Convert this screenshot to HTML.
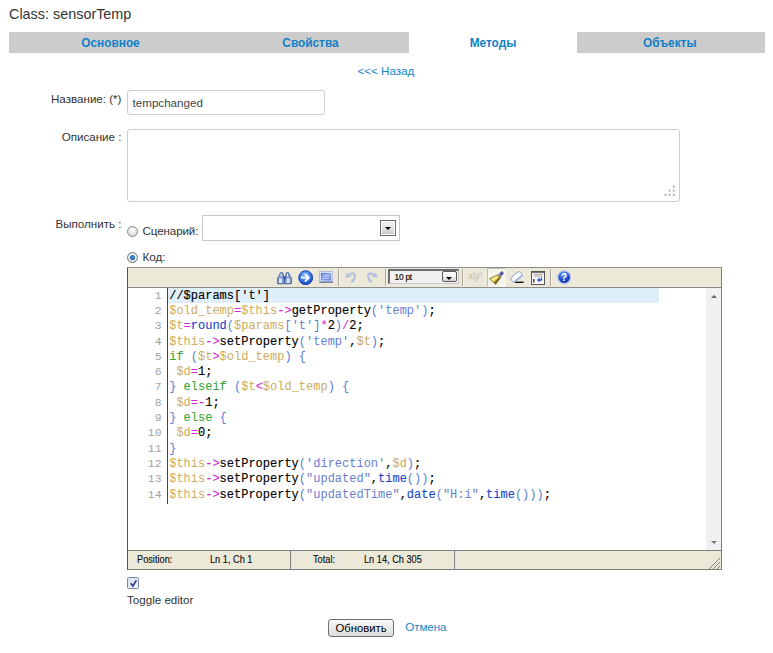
<!DOCTYPE html>
<html><head><meta charset="utf-8">
<style>
html,body{margin:0;padding:0;background:#fff;}
body{width:773px;height:653px;position:relative;overflow:hidden;font-family:"Liberation Sans",sans-serif;font-size:11.6px;color:#333;}
.abs{position:absolute;white-space:nowrap;}
a{color:#1487c9;text-decoration:none;}
#title{left:9px;top:6px;font-size:14.4px;line-height:17px;color:#333;}
#tabs{left:9px;top:31.6px;width:756px;height:21px;background:#ccc;}
.tab{position:absolute;top:0;height:21px;line-height:22.4px;text-align:center;font-weight:bold;font-size:11.85px;color:#1080c8;}
.lbl{text-align:right;width:121.5px;left:0;line-height:14px;color:#333;}
.inp{border:1px solid #ccc;border-radius:3px;background:#fff;box-sizing:border-box;}
.ln{position:absolute;left:0;width:34.5px;height:15.3px;line-height:15.3px;text-align:right;color:#a2a2a2;font-family:"Liberation Mono",monospace;font-size:11.4px;}
.cl{position:absolute;left:42.2px;height:15.3px;line-height:15.3px;font-family:"Liberation Mono",monospace;font-size:12px;color:#000;white-space:pre;}
.n{color:#000;-webkit-text-stroke:0.14px #000}
.v{color:#ccac60}
.k{color:#3aa63a;-webkit-text-stroke:0.1px #3aa63a}
.f{color:#1a44c8;-webkit-text-stroke:0.1px #1a44c8}
.s{color:#6a7ed0}
.o{color:#d428d4;-webkit-text-stroke:0.1px #d428d4}
.b{color:#5a7edc}
.sep{position:absolute;top:2px;width:1px;height:17px;background:#aca899;border-right:1px solid #f6f4ea;}
.st{position:absolute;top:0;height:18px;line-height:18.5px;font-size:10.1px;color:#111;-webkit-text-stroke:0.15px #111;transform:scaleX(0.912);transform-origin:0 0;}
</style></head><body>
<div class="abs" id="title">Class: sensorTemp</div>
<div class="abs" id="tabs">
 <div class="tab" style="left:0;width:203px;">Основное</div>
 <div class="tab" style="left:203px;width:197px;">Свойства</div>
 <div class="tab" style="left:400px;width:168px;background:#fff;">Методы</div>
 <div class="tab" style="left:568px;width:185.6px;">Объекты</div>
</div>
<a class="abs" style="left:357.5px;top:64px;line-height:14px;">&lt;&lt;&lt; Назад</a>

<div class="abs lbl" style="top:92px;">Название: (*)</div>
<div class="abs inp" style="left:127px;top:90px;width:198px;height:25px;"><span class="abs" style="left:4.6px;top:5px;line-height:14px;color:#444;">tempchanged</span></div>

<div class="abs lbl" style="top:130px;">Описание :</div>
<div class="abs inp" style="left:127px;top:129px;width:553px;height:73px;">
<svg class="abs" style="left:535.8px;top:55.4px" width="12" height="12" viewBox="0 0 12 12"><g fill="#b2b2b2"><rect x="8.8" y="0.5" width="2" height="2"/><rect x="4.65" y="4.65" width="2" height="2"/><rect x="8.8" y="4.65" width="2" height="2"/><rect x="0.5" y="8.8" width="2" height="2"/><rect x="4.65" y="8.8" width="2" height="2"/><rect x="8.8" y="8.8" width="2" height="2"/></g></svg>
</div>

<div class="abs lbl" style="top:217px;">Выполнить :</div>
<div class="abs" style="left:126.7px;top:226.3px;width:9.2px;height:9.2px;border:1px solid #8a8a8a;border-radius:50%;background:radial-gradient(circle at 50% 35%,#fff 0,#e6e6e6 55%,#c4c4c4 100%);"></div>
<div class="abs" style="left:142.6px;top:224px;line-height:14px;letter-spacing:-0.12px;">Сценарий:</div>
<div class="abs inp" style="left:202px;top:215px;width:198px;height:25.5px;border-radius:0;border-color:#c8c8c8;"></div>
<div class="abs" style="left:380px;top:220px;width:15.8px;height:15.8px;border:1px solid #6a6a6a;box-sizing:border-box;background:#fff;"><div style="position:absolute;left:1px;top:1px;right:1px;bottom:1px;background:linear-gradient(#f0f0f0,#e4e4e4 50%,#c8c8c8);"></div><div style="position:absolute;left:3.7px;top:6px;width:0;height:0;border-left:3.3px solid transparent;border-right:3.3px solid transparent;border-top:3.6px solid #000;"></div></div>
<div class="abs" style="left:126.7px;top:252.2px;width:9.2px;height:9.2px;border:1px solid #777;border-radius:50%;background:radial-gradient(circle at 50% 40%,#fff 0,#e4e4e4 60%,#c8c8c8 100%);"><div style="position:absolute;left:2.1px;top:2.1px;width:5px;height:5px;border-radius:50%;background:radial-gradient(circle at 50% 40%,#4aa0e0,#0a3a78);"></div></div>
<div class="abs" style="left:142.6px;top:250px;line-height:14px;">Код:</div>

<div class="abs" id="editor" style="left:127px;top:267px;width:595px;height:303px;background:#fff;">
 <div class="abs" style="left:0;top:0;width:595px;height:303px;border:1px solid #7c7c7c;border-top-color:#8e8e8e;border-left-color:#555;box-sizing:border-box;z-index:5;pointer-events:none;"></div>
 <div class="abs" style="left:0;top:0;width:595px;height:20px;background:#ece9d8;border-bottom:1px solid #8c8c8c;"><!-- binoculars -->
<svg class="abs" style="left:150px;top:4.5px" width="15" height="13" viewBox="0 0 15 13">
 <path d="M3.4 0.8h2.2l0.9 3.2 0.8 1.2v6.6h-6.6v-6l1.6-2z" fill="#8ea4d4" stroke="#3a5498" stroke-width="0.9"/>
 <path d="M9.4 0.8h2.2l1.1 3 1.6 2v6h-6.6v-6.6l0.8-1.2z" fill="#8ea4d4" stroke="#3a5498" stroke-width="0.9"/>
 <rect x="2.2" y="6.6" width="2.4" height="4.4" fill="#e8eefa"/><rect x="10" y="6.6" width="2.4" height="4.4" fill="#e8eefa"/>
 <rect x="3.6" y="1.6" width="1.2" height="2.4" fill="#dfe6f6"/><rect x="9.8" y="1.6" width="1.2" height="2.4" fill="#dfe6f6"/>
 <rect x="6.4" y="4.6" width="2.2" height="2.6" fill="#2a4690"/>
</svg>
<!-- go arrow -->
<svg class="abs" style="left:170.5px;top:3px" width="15.4" height="15.4" viewBox="0 0 16 16">
 <defs><radialGradient id="g1" cx="0.45" cy="0.35" r="0.7"><stop offset="0" stop-color="#9cc4ff"/><stop offset="0.55" stop-color="#3a78e6"/><stop offset="1" stop-color="#1234a8"/></radialGradient></defs>
 <circle cx="8" cy="8" r="7.3" fill="url(#g1)" stroke="#1a3cb0" stroke-width="0.9"/>
 <path d="M3.8 8h7.4M7.8 4.6l3.6 3.4-3.6 3.4" fill="none" stroke="#fff" stroke-width="1.9" stroke-linecap="round" stroke-linejoin="round"/>
</svg>
<!-- fullscreen -->
<svg class="abs" style="left:192px;top:4.3px" width="14" height="12" viewBox="0 0 14 12">
 <defs><linearGradient id="g3" x1="0" y1="0" x2="1" y2="1"><stop offset="0" stop-color="#4a6ad0"/><stop offset="0.5" stop-color="#8ea4ea"/><stop offset="1" stop-color="#5272d6"/></linearGradient></defs>
 <rect x="0.5" y="0.5" width="13" height="10.6" fill="#f4f6fc" stroke="#b4bcd8"/>
 <rect x="1.8" y="1.8" width="10.4" height="7.8" fill="url(#g3)"/>
 <rect x="3.6" y="3.4" width="6.8" height="0.9" fill="#c4d0f6"/><rect x="3.6" y="5.2" width="6.8" height="0.9" fill="#c4d0f6"/><rect x="3.6" y="7" width="6.8" height="0.9" fill="#c4d0f6"/>
 <rect x="0.6" y="10.6" width="13.2" height="1" fill="#3a4a8a"/>
</svg>
<div class="sep" style="left:211px"></div>
<!-- undo -->
<svg class="abs" style="left:218.2px;top:4.4px" width="12" height="12" viewBox="0 0 12 12"><path d="M4 4.6 C5.4 1.6 9.6 1.4 9.9 4.8 C10.1 7.2 8.4 9.6 6.4 11.2" fill="none" stroke="#b6c3dd" stroke-width="2.3" stroke-linecap="butt"/><path d="M0.3 6.9 L1.9 1.5 L6.3 5.6 Z" fill="#b6c3dd"/></svg>
<!-- redo -->
<svg class="abs" style="left:239.4px;top:4.4px" width="12" height="12" viewBox="0 0 12 12"><g transform="translate(12,0) scale(-1,1)"><path d="M4 4.6 C5.4 1.6 9.6 1.4 9.9 4.8 C10.1 7.2 8.4 9.6 6.4 11.2" fill="none" stroke="#b6c3dd" stroke-width="2.3" stroke-linecap="butt"/><path d="M0.3 6.9 L1.9 1.5 L6.3 5.6 Z" fill="#b6c3dd"/></g></svg>
<div class="sep" style="left:257.5px"></div>
<!-- select -->
<div class="abs" style="left:261px;top:2.2px;width:71px;height:15px;box-sizing:border-box;background:#f0f0f0;border:1px solid #c8c8c8;border-top:2px solid #6e6e6e;border-left:2px solid #6e6e6e;">
 <span class="abs" style="left:4.5px;top:-0.4px;line-height:12px;font-size:8.4px;color:#111;letter-spacing:-0.25px;-webkit-text-stroke:0.2px #111;">10 pt</span>
 <div class="abs" style="left:51.6px;top:-0.2px;width:15.8px;height:11.4px;box-sizing:border-box;border:1px solid #5a5a5a;border-radius:2px;background:linear-gradient(#fff,#f4f4f4 50%,#d0d0d0);"><div style="position:absolute;left:3.5px;top:5px;width:0;height:0;border-left:3.2px solid transparent;border-right:3.2px solid transparent;border-top:3.4px solid #000;"></div></div>
</div>
<div class="sep" style="left:335px"></div>
<!-- ab check (disabled) -->
<div class="abs" style="left:341px;top:3px;font-family:'Liberation Serif',serif;font-size:10.5px;line-height:12px;color:#cbc49a;">ab</div>
<svg class="abs" style="left:346px;top:5px" width="10" height="11" viewBox="0 0 10 11"><path d="M0.6 7.6 L3 10 L9.4 1.4 L7.6 0.6 L2.8 7.6 L1.6 6.6Z" fill="#f0eee0" stroke="#c0bcc8" stroke-width="0.8"/></svg>
<!-- pressed highlight button -->
<div class="abs" style="left:359.5px;top:1px;width:19px;height:18.5px;box-sizing:border-box;background:#f5f4ec;border:1px solid #c4c0ae;border-right-color:#fbfaf6;border-bottom-color:#fbfaf6;"></div>
<svg class="abs" style="left:362px;top:3.5px" width="15" height="14" viewBox="0 0 15 14">
 <path d="M10.4 3.2 L12.6 0.4 L14.6 2 L12.4 4.8Z" fill="#5a58b8" stroke="#3a3888" stroke-width="0.6"/>
 <path d="M8.6 4.2 L10.4 3 L12.6 4.8 L11.4 6.6Z" fill="#9a9ab0" stroke="#555" stroke-width="0.5"/>
 <path d="M0.4 7.6 L8.4 4 L11.6 6.8 L6.6 13.4 Z" fill="#e8c84a" stroke="#7a6a2a" stroke-width="0.7"/>
 <path d="M2 8 L8 5.2 L9.4 6.4 L4.6 9.8Z" fill="#f8ec9a"/>
 <path d="M5 11.6 L6.6 13.4 L11.6 6.8 L10.4 5.8Z" fill="#8a6a20"/>
</svg>
<!-- eraser -->
<svg class="abs" style="left:383px;top:4px" width="14" height="13" viewBox="0 0 14 13">
 <rect x="5" y="10.6" width="8.6" height="1.4" fill="#111"/>
 <g transform="rotate(-38 6.5 6)"><rect x="0.4" y="3" width="12.4" height="6" rx="2.6" fill="#fbfcff" stroke="#8a98c8" stroke-width="0.9"/><path d="M1 7.4 h11.4 a2.6 2.6 0 0 1 -2.2 1.6 h-7 a2.6 2.6 0 0 1 -2.2 -1.6z" fill="#aab8e4"/></g>
</svg>
<!-- word wrap -->
<svg class="abs" style="left:404px;top:4px" width="14" height="14" viewBox="0 0 14 14">
 <rect x="0.5" y="0.5" width="13" height="13" fill="#fff" stroke="#555"/>
 <rect x="1" y="1" width="12" height="1.2" fill="#777"/>
 <rect x="2.6" y="3.4" width="9" height="1" fill="#a08888"/><rect x="2.6" y="5.2" width="9" height="0.9" fill="#c8b8b8"/>
 <rect x="2.2" y="8" width="1.2" height="3.6" fill="#111"/>
 <path d="M11.2 6.4 v3.4 h-2.6 v1.6 l-2.8-2.4 2.8-2.4 v1.6 h1.2 v-1.8z" fill="#2a5ad8"/>
</svg>
<div class="sep" style="left:423px"></div>
<!-- help -->
<svg class="abs" style="left:429.6px;top:3.2px" width="14.4" height="14.4" viewBox="0 0 15 15">
 <defs><radialGradient id="g2" cx="0.45" cy="0.3" r="0.75"><stop offset="0" stop-color="#7aa8ff"/><stop offset="0.55" stop-color="#2050d0"/><stop offset="1" stop-color="#0a1a8a"/></radialGradient></defs>
 <circle cx="7.5" cy="7.5" r="6.7" fill="url(#g2)" stroke="#b4c6f0" stroke-width="1.3"/>
 <text x="7.5" y="11.3" text-anchor="middle" font-family="Liberation Sans, sans-serif" font-weight="bold" font-size="10.5" fill="#fff">?</text>
</svg>
</div>
 <div class="abs" style="left:41px;top:21px;width:491px;height:15.2px;background:#dfeffa;"></div>
 <div class="abs" style="left:39.8px;top:21px;width:1.4px;height:216px;background:#444;"></div>
 <div class="abs" style="left:579px;top:21px;width:15px;height:262px;background:#f0f0f0;"></div>
 <div class="abs" style="left:583.5px;top:27.5px;width:0;height:0;border-left:3.2px solid transparent;border-right:3.2px solid transparent;border-bottom:3.4px solid #666;"></div>
 <div class="abs" style="left:583.5px;top:273.5px;width:0;height:0;border-left:3.2px solid transparent;border-right:3.2px solid transparent;border-top:3.4px solid #777;"></div>
 <div class="ln" style="top:21.60px">1</div><div class="cl" style="top:21.60px"><span class="n">//$params['t']</span></div>
<div class="ln" style="top:36.90px">2</div><div class="cl" style="top:36.90px"><span class="v">$old_temp</span><span class="o">=</span><span class="v">$this</span><span class="o">-&gt;</span><span class="n">getProperty</span><span class="b">(</span><span class="s">'temp'</span><span class="b">)</span><span class="n">;</span></div>
<div class="ln" style="top:52.20px">3</div><div class="cl" style="top:52.20px"><span class="v">$t</span><span class="o">=</span><span class="f">round</span><span class="b">(</span><span class="v">$params</span><span class="b">[</span><span class="s">'t'</span><span class="b">]</span><span class="o">*</span><span class="n">2</span><span class="b">)</span><span class="o">/</span><span class="n">2;</span></div>
<div class="ln" style="top:67.50px">4</div><div class="cl" style="top:67.50px"><span class="v">$this</span><span class="o">-&gt;</span><span class="n">setProperty</span><span class="b">(</span><span class="s">'temp'</span><span class="n">,</span><span class="v">$t</span><span class="b">)</span><span class="n">;</span></div>
<div class="ln" style="top:82.80px">5</div><div class="cl" style="top:82.80px"><span class="k">if</span><span class="n"> </span><span class="b">(</span><span class="v">$t</span><span class="o">&gt;</span><span class="v">$old_temp</span><span class="b">)</span><span class="n"> </span><span class="b">{</span></div>
<div class="ln" style="top:98.10px">6</div><div class="cl" style="top:98.10px"><span class="n"> </span><span class="v">$d</span><span class="o">=</span><span class="n">1;</span></div>
<div class="ln" style="top:113.40px">7</div><div class="cl" style="top:113.40px"><span class="b">}</span><span class="n"> </span><span class="k">elseif</span><span class="n"> </span><span class="b">(</span><span class="v">$t</span><span class="o">&lt;</span><span class="v">$old_temp</span><span class="b">)</span><span class="n"> </span><span class="b">{</span></div>
<div class="ln" style="top:128.70px">8</div><div class="cl" style="top:128.70px"><span class="n"> </span><span class="v">$d</span><span class="o">=-</span><span class="n">1;</span></div>
<div class="ln" style="top:144.00px">9</div><div class="cl" style="top:144.00px"><span class="b">}</span><span class="n"> </span><span class="k">else</span><span class="n"> </span><span class="b">{</span></div>
<div class="ln" style="top:159.30px">10</div><div class="cl" style="top:159.30px"><span class="n"> </span><span class="v">$d</span><span class="o">=</span><span class="n">0;</span></div>
<div class="ln" style="top:174.60px">11</div><div class="cl" style="top:174.60px"><span class="b">}</span></div>
<div class="ln" style="top:189.90px">12</div><div class="cl" style="top:189.90px"><span class="v">$this</span><span class="o">-&gt;</span><span class="n">setProperty</span><span class="b">(</span><span class="s">'direction'</span><span class="n">,</span><span class="v">$d</span><span class="b">)</span><span class="n">;</span></div>
<div class="ln" style="top:205.20px">13</div><div class="cl" style="top:205.20px"><span class="v">$this</span><span class="o">-&gt;</span><span class="n">setProperty</span><span class="b">(</span><span class="s">"updated"</span><span class="n">,</span><span class="f">time</span><span class="b">())</span><span class="n">;</span></div>
<div class="ln" style="top:220.50px">14</div><div class="cl" style="top:220.50px"><span class="v">$this</span><span class="o">-&gt;</span><span class="n">setProperty</span><span class="b">(</span><span class="s">"updatedTime"</span><span class="n">,</span><span class="f">date</span><span class="b">(</span><span class="s">"H:i"</span><span class="n">,</span><span class="f">time</span><span class="b">()))</span><span class="n">;</span></div>

 <div class="abs" style="left:0;top:283px;width:595px;height:20px;background:#ece9d8;border-top:1px solid #808080;box-sizing:border-box;">
   <span class="st" style="left:10px;">Position:</span>
   <span class="st" style="left:82.6px;">Ln 1, Ch 1</span>
   <div style="position:absolute;left:163px;top:0;width:1px;height:19px;background:#808080;"></div>
   <span class="st" style="left:186px;">Total:</span>
   <span class="st" style="left:237px;">Ln 14, Ch 305</span>
   <div style="position:absolute;left:327px;top:0;width:1px;height:19px;background:#808080;"></div>
   <svg class="abs" style="right:2px;bottom:1px" width="12" height="12" viewBox="0 0 12 12"><g stroke="#808080" stroke-width="1"><line x1="1" y1="12" x2="12" y2="1"/><line x1="5" y1="12" x2="12" y2="5"/><line x1="9" y1="12" x2="12" y2="9"/></g></svg>
 </div>
</div>

<div class="abs" style="left:127px;top:577.4px;width:12px;height:11.5px;border:1px solid #7a88a6;border-radius:1.5px;box-sizing:border-box;background:linear-gradient(135deg,#d8dfee,#f4f6fb);"><svg width="9" height="9" viewBox="0 0 9 9" style="position:absolute;left:0.6px;top:0.2px"><path d="M1.8 4.2 L3.8 7 L7.4 1.4" fill="none" stroke="#2a3a8a" stroke-width="1.7"/></svg></div>
<div class="abs" style="left:127px;top:592.7px;line-height:14px;">Toggle editor</div>
<div class="abs" style="left:328px;top:619px;width:66px;height:18px;border:1px solid #707070;border-radius:3px;box-sizing:border-box;background:linear-gradient(#f8f8f8,#dddddd);text-align:center;line-height:16.6px;font-size:11.3px;color:#000;">Обновить</div>
<a class="abs" style="left:405.3px;top:620px;line-height:14px;letter-spacing:-0.1px;">Отмена</a>
</body></html>
